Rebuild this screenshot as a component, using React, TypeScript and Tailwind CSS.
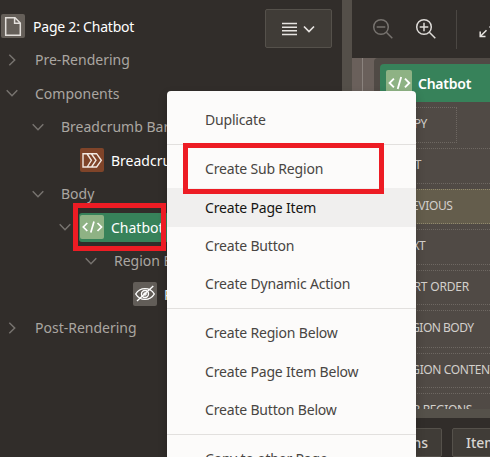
import type { ReactNode } from "react";

function Chevron({ open }: { open: boolean }) {
  return (
    <svg width="12" height="12" viewBox="0 0 12 12" fill="none" stroke="#77736f" strokeWidth="1.5">
      <path d={open ? "M0.7 3.3 L6 8.7 L11.3 3.3" : "M3.3 0.7 L8.7 6 L3.3 11.3"} />
    </svg>
  );
}

function CodeIcon({ size }: { size: number }) {
  return (
    <svg width={size} height={size} viewBox="0 0 24 24" fill="none" stroke="#fff" strokeWidth="1.7">
      <path d="M7.3 8 L3.3 12 L7.3 16 M17.5 8 L21.5 12 L17.5 16 M14 6.5 L10.8 17.5" />
    </svg>
  );
}

function PageIcon() {
  return (
    <svg width="24" height="24" viewBox="0 0 24 24" fill="none" stroke="#e4e0dc" strokeWidth="1.5">
      <path d="M4.7 3.7 H14 L19.3 9 V21.3 H4.7 Z M13.6 3.7 V9.2 H19.3" />
    </svg>
  );
}

function BreadcrumbIcon() {
  return (
    <svg width="24" height="24" viewBox="0 0 24 24" fill="none" stroke="#f3e9e2" strokeWidth="1.4">
      <path d="M3 5.7 H16.6 L21.3 12.3 L16.6 19 H3 Z M7.2 6 L11.4 12.3 L7.2 19 M11.5 6 L16 12.3 L11.5 19" />
    </svg>
  );
}

function HiddenIcon() {
  return (
    <svg width="24" height="24" viewBox="0 0 24 24" fill="none" stroke="#fff" strokeWidth="1.4">
      <path d="M2.7 12 C7 4.8 17 4.8 21.3 12 C17 19.2 7 19.2 2.7 12 Z M4 19 L20.3 4" />
      <circle cx="12" cy="12" r="3.5" />
      <circle cx="12" cy="12" r="1.1" />
    </svg>
  );
}

function Magnifier({ plus }: { plus: boolean }) {
  return (
    <svg className="shrink-0" width="22" height="22" viewBox="0 0 22 22" fill="none" stroke={plus ? "#dedbd8" : "#77736f"} strokeWidth="1.5">
      <circle cx="9" cy="9" r="7.3" />
      <path d={plus ? "M14.3 14.3 L20.3 20.3 M4.7 9 H13.3 M9 4.7 V13.3" : "M14.3 14.3 L20.3 20.3 M4.7 9 H13.3"} />
    </svg>
  );
}

function Branch({ indent, open, children }: { indent: string; open: boolean; children: ReactNode }) {
  return (
    <div className={`flex h-[33.5px] items-center text-[#aaa6a1] ${indent}`}>
      <Chevron open={open} />
      <span className="ml-[17px]">{children}</span>
    </div>
  );
}

function Slot({ children, className }: { children: string; className: string }) {
  return (
    <div className={`flex shrink-0 items-center border border-dotted pb-[2px] pl-[11px] text-[12px] text-[#d3d0cc] ${className}`}>
      {children}
    </div>
  );
}

function MenuItem({ children, active = false }: { children: string; active?: boolean }) {
  return (
    <div
      className={`flex h-[38.4px] shrink-0 items-center pb-px pl-[38px] tracking-[-0.18px] ${
        active ? "bg-[#f0efee] text-[#161513]" : "text-[#484542]"
      }`}
    >
      {children}
    </div>
  );
}

function MenuGroup({ children, className }: { children: ReactNode; className: string }) {
  return <div className={`flex shrink-0 flex-col ${className}`}>{children}</div>;
}

export default function App() {
  return (
    <div className="relative flex h-[457px] w-[490px] overflow-hidden bg-[#312d2a] font-['Noto_Sans',sans-serif] text-[14px] whitespace-nowrap">
      <aside className="flex w-[342px] shrink-0 flex-col">
        <header className="flex h-[43px] shrink-0 items-start justify-between pr-[10px] pl-px">
          <div className="flex h-[52px] items-center gap-2 text-white">
            <span className="flex rounded-[2px] bg-[#655f59]"><PageIcon /></span>
            <span className="tracking-[-0.22px]">Page 2: Chatbot</span>
          </div>
          <div className="mt-[9px] flex h-[39px] w-[67px] shrink-0 items-center justify-center gap-[6px] rounded-[2px] border border-[#55514b] bg-[#403c37]">
            <svg width="15" height="14" viewBox="0 0 15 14" stroke="#e7e4e1" strokeWidth="1.5">
              <path d="M0 1.5 H15 M0 5.2 H15 M0 8.8 H15 M0 12.4 H15" />
            </svg>
            <svg width="12" height="12" viewBox="0 0 12 12" fill="none" stroke="#e7e4e1" strokeWidth="1.7">
              <path d="M1 3.5 L6 8.5 L11 3.5" />
            </svg>
          </div>
        </header>
        <Branch indent="pl-[6px]" open={false}>Pre-Rendering</Branch>
        <Branch indent="pl-[6px]" open>Components</Branch>
        <Branch indent="pl-[32px]" open>Breadcrumb Bar</Branch>
        <div className="flex h-[33.5px] items-center gap-[7px] pl-[80px] text-white">
          <span className="flex rounded-[2px] bg-[#7f4429]"><BreadcrumbIcon /></span>
          Breadcrumb
        </div>
        <Branch indent="pl-[32px]" open>Body</Branch>
        <div className="flex h-[33.5px] items-center pl-[59px]">
          <Chevron open />
          <div className="ml-[8px] flex h-[29px] w-[200px] items-center gap-[7px] rounded-[3px] bg-[#37825a] pl-px text-white">
            <span className="flex rounded-[2px] bg-[#8eb284]"><CodeIcon size={24} /></span>
            Chatbot
          </div>
        </div>
        <Branch indent="pl-[85px]" open>Region Body</Branch>
        <div className="flex h-[33.5px] items-center gap-[7px] pl-[133px] text-white">
          <span className="flex rounded-[2px] bg-[#625d58]"><HiddenIcon /></span>
          P2_ID
        </div>
        <Branch indent="pl-[6px]" open={false}>Post-Rendering</Branch>
      </aside>

      <div className="w-[10px] shrink-0 bg-[#544f49]" />

      <main className="flex w-[138px] shrink-0 flex-col overflow-hidden">
        <div className="flex h-[58px] shrink-0 items-center pl-[20px]">
          <Magnifier plus={false} />
          <span className="ml-[21px] flex shrink-0"><Magnifier plus /></span>
          <span className="ml-[19px] h-[39px] w-px shrink-0 bg-[#4b4743]" />
          <svg className="ml-[22px] shrink-0" width="20" height="20" viewBox="0 0 20 20" fill="none" stroke="#e7e4e1" strokeWidth="1.5">
            <path d="M1.2 12.5 V17.5 H6.5 M1.2 17.5 L7.5 11.2 M10.5 8.5 L18 1 M12.5 1 H18 V6.5" />
          </svg>
        </div>
        <div className="flex h-[351px] shrink-0 overflow-hidden bg-[#6a605b]">
          <div className="w-[11px] shrink-0 border-r border-[#8b837e]" />
          <div className="ml-[11px] flex w-[140px] shrink-0 flex-col overflow-hidden rounded-tl-[4px] bg-[#504a45] pt-[6px] pl-[6px]">
            <div className="flex h-[38px] shrink-0 items-center gap-[6px] rounded-tl-[4px] bg-[#37825a] pl-[6px] font-semibold tracking-[-0.25px] text-white">
              <span className="flex rounded-[2px] bg-[#8eb284]"><CodeIcon size={26} /></span>
              Chatbot
            </div>
            <div className="mt-[5px] flex shrink-0 flex-col gap-[5px] pl-[6px]">
              <Slot className="h-[36px] w-[71px] border-[#6e6862] tracking-[-0.5px]">COPY</Slot>
              <Slot className="h-[36px] border-[#6e6862] tracking-[-0.9px]">EDIT</Slot>
              <Slot className="h-[35px] border-[#91896d] bg-[#645d4c] tracking-[-0.35px]">PREVIOUS</Slot>
              <Slot className="h-[36px] border-[#6e6862] tracking-[-0.6px]">NEXT</Slot>
              <Slot className="h-[35px] border-[#6e6862] tracking-[-0.2px]">SORT ORDER</Slot>
              <Slot className="h-[38px] border-[#6e6862] tracking-[-0.5px]">REGION BODY</Slot>
              <Slot className="h-[35px] border-[#6e6862] tracking-[-0.4px]">REGION CONTENT</Slot>
              <Slot className="h-[35px] border-[#6e6862] tracking-[-0.4px]">SUB REGIONS</Slot>
            </div>
          </div>
        </div>
        <div className="h-[9px] shrink-0 bg-[#55514a]" />
        <div className="flex gap-[10px] pt-[10px] font-medium text-[#d8d5d1]">
          <div className="flex h-[29px] w-[90px] shrink-0 items-center justify-end rounded-[2px] border border-[#55514b] bg-[#403c37] pr-[13px]">Regions</div>
          <div className="flex h-[29px] w-[70px] shrink-0 items-center rounded-[2px] border border-[#55514b] bg-[#403c37] pl-[13px]">Items</div>
        </div>
      </main>

      <div className="absolute top-[91px] left-[167px] flex h-[366px] w-[249px] flex-col overflow-hidden rounded-t-[4px] bg-[#fcfbfa] shadow-[0_4px_10px_rgba(0,0,0,0.2)]">
        <MenuGroup className="h-[53px] pt-[10px]">
          <MenuItem>Duplicate</MenuItem>
        </MenuGroup>
        <MenuGroup className="h-[164px] border-t border-[#e2e0de] pt-[5px]">
          <MenuItem>Create Sub Region</MenuItem>
          <MenuItem active>Create Page Item</MenuItem>
          <MenuItem>Create Button</MenuItem>
          <MenuItem>Create Dynamic Action</MenuItem>
        </MenuGroup>
        <MenuGroup className="h-[126px] border-t border-[#e2e0de] pt-[5px]">
          <MenuItem>Create Region Below</MenuItem>
          <MenuItem>Create Page Item Below</MenuItem>
          <MenuItem>Create Button Below</MenuItem>
        </MenuGroup>
        <MenuGroup className="border-t border-[#e2e0de] pt-[5px]">
          <MenuItem>Copy to other Page...</MenuItem>
        </MenuGroup>
      </div>

      <div className="absolute top-[203px] left-[73px] h-[48px] w-[93px] border-5 border-[#ed1c24]" />
      <div className="absolute top-[143px] left-[183px] h-[51px] w-[201px] border-5 border-[#ed1c24]" />
    </div>
  );
}
